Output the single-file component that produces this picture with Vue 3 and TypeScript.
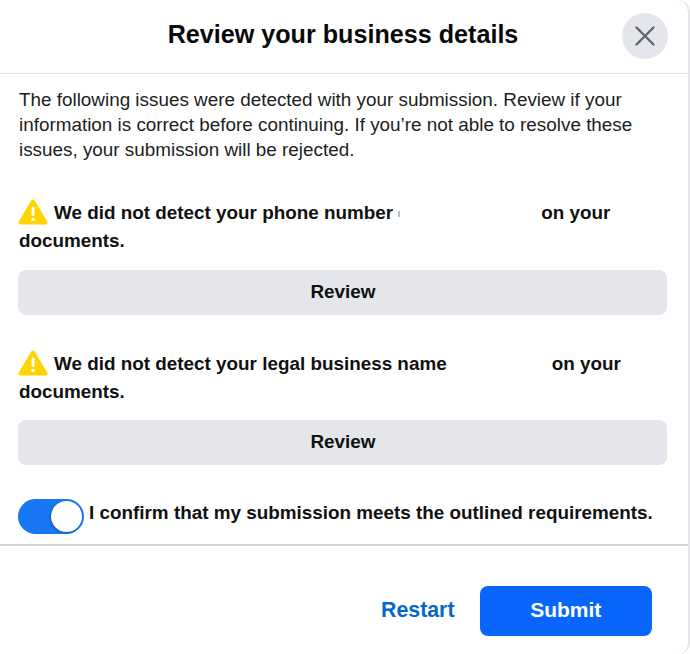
<script setup lang="ts">
import { ref } from 'vue'

interface Issue {
  lead: string
  gap: number
  tail: string
  tick: boolean
}

const issues: Issue[] = [
  { lead: 'We did not detect your phone number', gap: 148, tail: 'on your documents.', tick: true },
  { lead: 'We did not detect your legal business name', gap: 105, tail: 'on your documents.', tick: false },
]
const confirmed = ref(true)
</script>

<template>
  <div class="dialog">
    <header class="head">
      <h1 class="title">Review your business details</h1>
      <button class="close" aria-label="Close">
        <svg width="22" height="22" viewBox="0 0 22 22" fill="none">
          <path d="M2.5 2.5 L19.5 19.5 M19.5 2.5 L2.5 19.5" stroke="#5f6670" stroke-width="2.4" stroke-linecap="round" />
        </svg>
      </button>
    </header>
    <main class="body">
      <p class="intro">The following issues were detected with your submission. Review if your information is correct before continuing. If you’re not able to resolve these issues, your submission will be rejected.</p>
      <section v-for="(issue, i) in issues" :key="i" class="issue">
        <p class="issue-text">
          <svg class="warn" width="30" height="26" viewBox="0 0 30 26">
            <path d="M15 2.5 L27.5 23.5 H2.5 Z" fill="#ffd400" stroke="#ffd400" stroke-width="4" stroke-linejoin="round" />
            <rect x="13.5" y="7.5" width="3" height="9.5" rx="1.5" fill="#fff" />
            <circle cx="15" cy="20.5" r="1.8" fill="#fff" />
          </svg>{{ issue.lead }}<span class="redact" :style="{ width: issue.gap + 'px' }"><i v-if="issue.tick" class="tick"></i></span>{{ issue.tail }}
        </p>
        <button class="review">Review</button>
      </section>
      <div class="confirm">
        <button class="toggle" :class="{ on: confirmed }" role="switch" :aria-checked="confirmed" @click="confirmed = !confirmed"><span class="knob"></span></button>
        <span class="confirm-text">I confirm that my submission meets the outlined requirements.</span>
      </div>
    </main>
    <footer class="foot">
      <button class="restart">Restart</button>
      <button class="submit">Submit</button>
    </footer>
  </div>
</template>

<style>
html, body { background: #fff; }
</style>

<style scoped>
.dialog {
  box-sizing: border-box;
  width: 690px;
  height: 654px;
  display: flex;
  flex-direction: column;
  background: #fff;
  border-right: 2px solid #e4e5e8;
  border-radius: 0 12px 12px 0;
  font-family: "Liberation Sans", Arial, sans-serif;
  color: #1c1e21;
  overflow: hidden;
}
.head {
  position: relative;
  height: 74px;
  flex: none;
  box-sizing: border-box;
  border-bottom: 1px solid #e4e5e8;
  display: flex;
  align-items: center;
  justify-content: center;
  padding: 0 2px 4px 0;
}
.title {
  margin: 0;
  font-size: 25.15px;
  font-weight: 700;
  color: #0a0a0a;
}
.close {
  position: absolute;
  left: 622px;
  top: 13px;
  width: 46px;
  height: 46px;
  padding: 0;
  border: 0;
  border-radius: 50%;
  background: #e4e6eb;
  display: flex;
  align-items: center;
  justify-content: center;
}
.body {
  flex: none;
  height: 472px;
  box-sizing: border-box;
  padding: 13px 21px 0 19px;
  border-bottom: 2px solid #d3d5d9;
}
.intro {
  margin: 0 0 37px;
  font-size: 18.87px;
  line-height: 25px;
  color: #1c1e21;
}
.issue { margin-bottom: 35px; }
.issue-text {
  margin: 0 0 15px;
  font-size: 18.87px;
  font-weight: 700;
  line-height: 28px;
  color: #111;
}
.issue + .issue .issue-text { margin-bottom: 14px; }
.warn {
  vertical-align: -6px;
  margin: 0 6px 0 -1px;
}
.redact {
  display: inline-block;
  height: 10px;
  position: relative;
}
.tick {
  position: absolute;
  left: 5px;
  top: 2px;
  width: 2px;
  height: 6px;
  background: #b9bcc0;
}
.review {
  display: block;
  width: calc(100% + 1px);
  height: 45px;
  margin-left: -1px;
  padding: 0 0 2px 1px;
  border: 0;
  border-radius: 8px;
  background: #e4e6eb;
  font: 700 18.9px "Liberation Sans", Arial, sans-serif;
  color: #111;
}
.confirm {
  display: flex;
  align-items: center;
  gap: 5px;
  margin: -1px 0 0 -1px;
}
.toggle {
  flex: none;
  width: 66px;
  height: 35px;
  padding: 0;
  border: 0;
  border-radius: 18px;
  background: #1877f2;
  position: relative;
}
.knob {
  position: absolute;
  right: 2px;
  top: 2px;
  width: 31px;
  height: 31px;
  border-radius: 50%;
  background: #fff;
  box-shadow: -1px 1px 2px rgba(0, 0, 0, .3);
}
.confirm-text {
  font-size: 18.87px;
  font-weight: 700;
  color: #111;
  white-space: nowrap;
  padding-bottom: 8px;
}
.foot {
  flex: 1;
  display: flex;
  align-items: flex-start;
  justify-content: flex-end;
  gap: 25px;
  padding: 40px 36px 0 0;
}
.restart {
  border: 0;
  padding: 0 0 2px;
  height: 50px;
  background: none;
  font: 700 21.3px "Liberation Sans", Arial, sans-serif;
  color: #0567c8;
}
.submit {
  width: 172.5px;
  height: 50px;
  padding: 0 0 2px;
  border: 0;
  border-radius: 8px;
  background: #0866ff;
  font: 700 21px "Liberation Sans", Arial, sans-serif;
  color: #fff;
}
</style>
